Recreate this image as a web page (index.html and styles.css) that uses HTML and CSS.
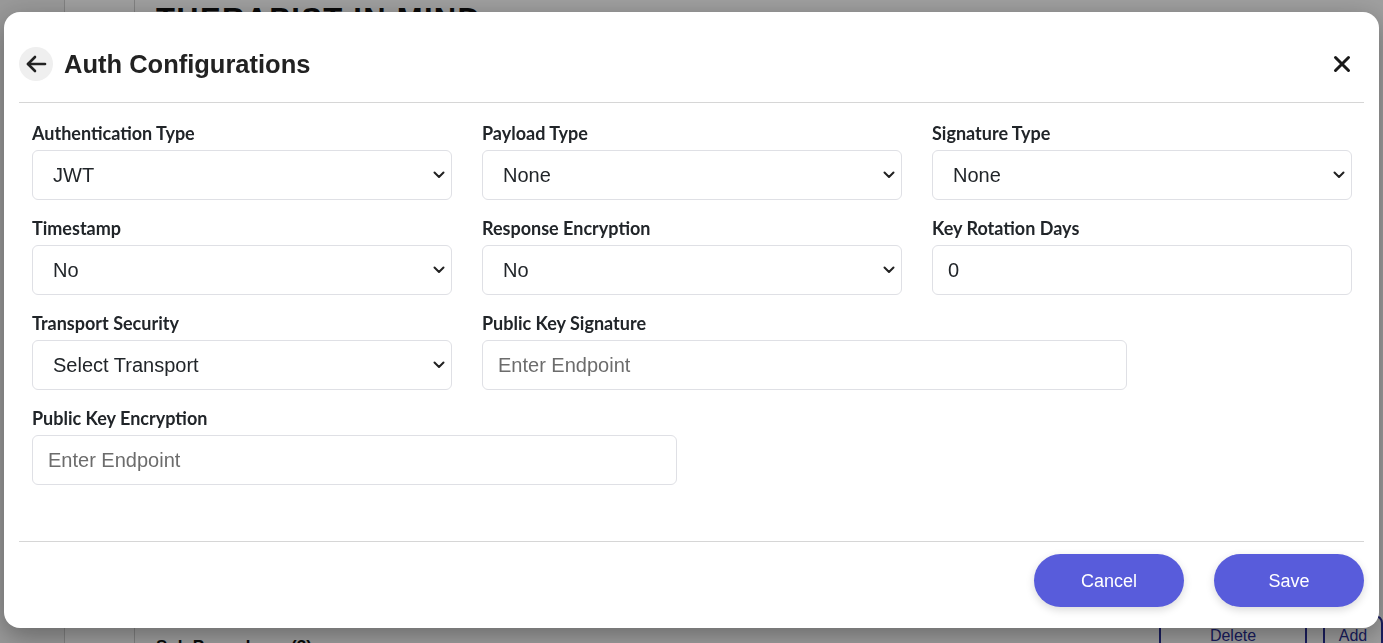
FILE: index.html
```html
<!DOCTYPE html>
<html lang="en">
<head>
<meta charset="utf-8">
<title>Auth Configurations</title>
<link rel="stylesheet" href="styles.css">
</head>
<body>
<div class="page">
  <aside class="rail"></aside>
  <aside class="subrail"></aside>
  <main class="page-main">
    <h1 class="brand">THERAPIST IN MIND</h1>
    <div class="page-bottom">
      <span class="sub-title">Sub Procedures (3)</span>
      <span class="ghost-btn">Delete</span>
      <span class="ghost-btn small">Add</span>
    </div>
  </main>
</div>

<div class="overlay">
  <div class="modal">
    <header class="modal-header">
      <button class="back-btn" type="button" aria-label="Back">
        <svg width="24" height="24" viewBox="0 0 24 24" fill="none" stroke="#222" stroke-width="2.6" stroke-linecap="round" stroke-linejoin="round"><path d="M21 12H4"/><path d="M11 5l-7 7 7 7"/></svg>
      </button>
      <h2 class="modal-title">Auth Configurations</h2>
      <button class="close-btn" type="button" aria-label="Close">
        <svg width="18" height="18" viewBox="0 0 18 18" stroke="#1a1a1a" stroke-width="3" stroke-linecap="round"><path d="M2.5 2.5l13 13M15.5 2.5l-13 13"/></svg>
      </button>
    </header>

    <div class="modal-body">
      <div class="field">
        <label class="field-label">Authentication Type</label>
        <select class="control"><option>JWT</option></select>
      </div>
      <div class="field">
        <label class="field-label">Payload Type</label>
        <select class="control"><option>None</option></select>
      </div>
      <div class="field">
        <label class="field-label">Signature Type</label>
        <select class="control"><option>None</option></select>
      </div>

      <div class="field">
        <label class="field-label">Timestamp</label>
        <select class="control"><option>No</option></select>
      </div>
      <div class="field">
        <label class="field-label">Response Encryption</label>
        <select class="control"><option>No</option></select>
      </div>
      <div class="field">
        <label class="field-label">Key Rotation Days</label>
        <input class="control text" type="text" value="0">
      </div>

      <div class="field">
        <label class="field-label">Transport Security</label>
        <select class="control"><option>Select Transport</option></select>
      </div>
      <div class="field wide">
        <label class="field-label">Public Key Signature</label>
        <input class="control text" type="text" placeholder="Enter Endpoint">
      </div>

      <div class="field wide">
        <label class="field-label">Public Key Encryption</label>
        <input class="control text" type="text" placeholder="Enter Endpoint">
      </div>
    </div>

    <footer class="modal-footer">
      <button class="pill-btn" type="button">Cancel</button>
      <button class="pill-btn" type="button">Save</button>
    </footer>
  </div>
</div>
</body>
</html>
```

FILE: styles.css
```css
* { box-sizing: border-box; }

html, body {
  margin: 0;
  height: 100%;
}

body {
  font-family: "Liberation Sans", Arial, sans-serif;
  background: #fff;
  overflow: hidden;
}

/* underlying page */
.page {
  display: flex;
  height: 100%;
}
.rail {
  width: 65px;
  background: #f6f6f6;
  border-right: 1px solid #d0d0d0;
}
.subrail {
  width: 70px;
  border-right: 1px solid #d0d0d0;
}
.page-main {
  flex: 1;
  display: flex;
  flex-direction: column;
  justify-content: space-between;
  padding: 0 0 0 21px;
}
.brand {
  margin: 2px 0 0;
  font-size: 31px;
  letter-spacing: 1.3px;
  font-weight: 900;
  color: #111;
}
.page-bottom {
  display: flex;
  align-items: flex-start;
  height: 14px;
  gap: 16px;
}
.sub-title {
  font-weight: 700;
  font-size: 17px;
  line-height: 20px;
  color: #111;
  margin-right: auto;
  padding-top: 8px;
}
.ghost-btn {
  width: 148px;
  height: 40px;
  border: 2px solid #2a2f9a;
  border-radius: 8px;
  color: #2a2f9a;
  text-align: center;
  padding-top: 10px;
  margin-top: -14px;
}
.ghost-btn.small { width: 60px; }

.overlay {
  position: fixed;
  inset: 0;
  background: rgba(0, 0, 0, 0.375);
  display: flex;
  justify-content: center;
  align-items: flex-start;
  padding-top: 12px;
}

.modal {
  width: 1375px;
  height: 616px;
  background: #fff;
  border-radius: 16px;
  box-shadow: 0 8px 28px rgba(0, 0, 0, 0.35);
  display: flex;
  flex-direction: column;
  padding: 0 15px;
}

.modal-header {
  display: flex;
  align-items: center;
  gap: 11px;
  padding: 35px 0 21px;
  border-bottom: 1px solid #d6d6d6;
}
.back-btn {
  width: 34px;
  height: 34px;
  border-radius: 50%;
  border: none;
  background: #efefef;
  display: flex;
  align-items: center;
  justify-content: center;
  padding: 0;
}
.modal-title {
  margin: 0;
  font-size: 25.5px;
  font-weight: 700;
  color: #222;
  flex: 1;
}
.close-btn {
  width: 34px;
  height: 34px;
  border: none;
  background: transparent;
  display: flex;
  align-items: center;
  justify-content: center;
  padding: 0;
  margin-right: 5px;
}

.modal-body {
  flex: 1;
  display: grid;
  grid-template-columns: repeat(6, 1fr);
  grid-auto-rows: min-content;
  column-gap: 30px;
  row-gap: 18px;
  padding: 20px 12px 0 13px;
}

.field {
  grid-column: span 2;
  display: flex;
  flex-direction: column;
  gap: 7px;
}
.field.wide { grid-column: span 3; }

.field-label {
  font-family: "Lato", "Noto Sans", sans-serif;
  font-weight: 700;
  font-size: 18px;
  line-height: 20px;
  color: #212529;
}

.control {
  height: 50px;
  width: 100%;
  border: 1px solid #dfe0e5;
  border-radius: 6px;
  background-color: #fff;
  font-family: "Liberation Sans", Arial, sans-serif;
  font-size: 20px;
  color: #212529;
  padding: 0 34px 0 20px;
  outline: none;
}
select.control {
  appearance: none;
  -webkit-appearance: none;
  background-image: url("data:image/svg+xml,%3Csvg xmlns='http://www.w3.org/2000/svg' width='12' height='8' viewBox='0 0 12 8'%3E%3Cpath d='M1.5 1.5l4.5 4.5 4.5-4.5' fill='none' stroke='%23222' stroke-width='2' stroke-linecap='round' stroke-linejoin='round'/%3E%3C/svg%3E");
  background-repeat: no-repeat;
  background-position: right 6px center;
  background-size: 12px 8px;
}
.control.text {
  padding: 0 15px;
}
.control::placeholder {
  color: #6c6c6c;
}

.modal-footer {
  display: flex;
  justify-content: flex-end;
  gap: 30px;
  border-top: 1px solid #d6d6d6;
  padding: 12px 0 21px;
}
.pill-btn {
  width: 150px;
  height: 53px;
  border: none;
  border-radius: 27px;
  background: #585cdb;
  color: #fff;
  font-family: "Liberation Sans", Arial, sans-serif;
  font-size: 18px;
  padding-top: 2px;
  box-shadow: 0 3px 8px rgba(0, 0, 0, 0.15);
}
```
